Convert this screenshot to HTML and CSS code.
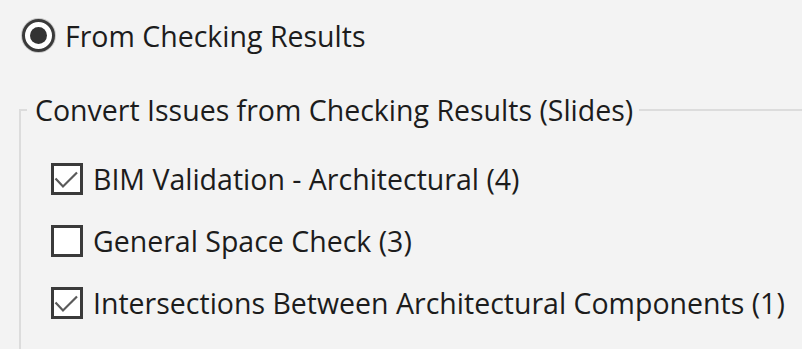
FILE: index.html
```html
<!DOCTYPE html>
<html>
<head>
<meta charset="utf-8">
<link rel="stylesheet" href="styles.css">
</head>
<body>
<div class="page">
  <label class="radio-row">
    <span class="radio"><span class="dot"></span></span>
    <span class="text">From Checking Results</span>
  </label>
  <fieldset class="group">
    <legend class="legend">Convert Issues from Checking Results (Slides)</legend>
    <div class="items">
      <label class="check-row">
        <span class="box"><svg class="tick" viewBox="0 0 26 26"><path d="M1.5 12.5 L9 20.5 L23 6.5" /></svg></span>
        <span class="text">BIM Validation - Architectural (4)</span>
      </label>
      <label class="check-row">
        <span class="box"></span>
        <span class="text">General Space Check (3)</span>
      </label>
      <label class="check-row">
        <span class="box"><svg class="tick" viewBox="0 0 26 26"><path d="M1.5 12.5 L9 20.5 L23 6.5" /></svg></span>
        <span class="text">Intersections Between Architectural Components (1)</span>
      </label>
    </div>
  </fieldset>
</div>
</body>
</html>
```

FILE: styles.css
```css
html, body {
  margin: 0;
  padding: 0;
  background: #f3f3f3;
  overflow: hidden;
}
.page {
  width: 802px;
  height: 349px;
  overflow: hidden;
  font-family: "Open Sans", "Noto Sans", sans-serif;
  font-size: 28.5px;
  color: #1c1c1c;
}
.radio-row {
  display: flex;
  align-items: center;
  gap: 10px;
  padding: 19px 0 0 22px;
  height: 33px;
}
.radio {
  box-sizing: border-box;
  width: 33px;
  height: 33px;
  border: 3px solid #3a3a3a;
  border-radius: 50%;
  display: flex;
  align-items: center;
  justify-content: center;
  background: #fff;
  box-shadow: 0 0 0 1px #c8c8c8;
}
.dot {
  width: 17px;
  height: 17px;
  border-radius: 50%;
  background: #333;
}
.group {
  box-sizing: border-box;
  height: 257px;
  margin: 40px -20px 0 19px;
  padding: 0;
  border: 2px solid #dcdcdc;
  border-bottom: none;
}
.legend {
  padding: 0 6px 0 8px;
  margin-left: 6px;
  line-height: 36px;
}
.items {
  display: flex;
  flex-direction: column;
  gap: 30px;
  padding: 35px 0 0 30px;
}
.check-row {
  display: flex;
  align-items: center;
  gap: 10px;
  height: 32px;
}
.box {
  box-sizing: border-box;
  width: 32px;
  height: 32px;
  border: 3px solid #3a3a3a;
  background: #fff;
  display: flex;
  align-items: center;
  justify-content: center;
}
.tick {
  width: 26px;
  height: 26px;
  fill: none;
  stroke: #5a5a5a;
  stroke-width: 2.2;
}
.text {
  white-space: nowrap;
}
```
